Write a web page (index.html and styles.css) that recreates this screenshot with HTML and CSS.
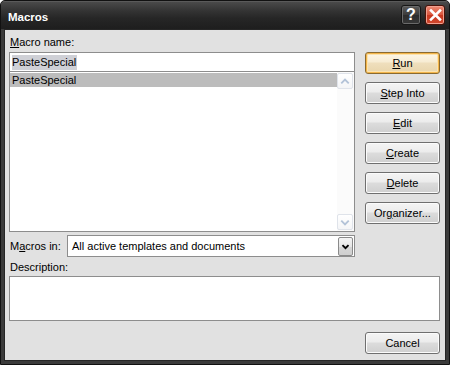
FILE: index.html
```html
<!DOCTYPE html>
<html>
<head>
<meta charset="utf-8">
<title>Macros</title>
<link rel="stylesheet" href="styles.css">
</head>
<body>
<div class="window">
  <div class="titlebar">
    <span class="title">Macros</span>
    <div class="caption-btns">
      <div class="cap help">?</div>
      <div class="cap close">
        <svg width="19" height="20" viewBox="0 0 19 20"><path d="M5 5.5 L14 14.5 M14 5.5 L5 14.5" stroke="#fff" stroke-width="2.6" stroke-linecap="square" fill="none"/></svg>
      </div>
    </div>
  </div>
  <div class="client">
    <div class="main">
      <div class="left">
        <div class="lbl"><u>M</u>acro name:</div>
        <div class="input"><span class="sel">PasteSpecial</span></div>
        <div class="list">
          <div class="items">
            <div class="item selected">PasteSpecial</div>
          </div>
          <div class="scroll">
            <div class="sbtn">
              <svg width="15" height="15" viewBox="0 0 15 15"><path d="M3.5 9.5 L7.5 5.5 L11.5 9.5" stroke="#b3c3d8" stroke-width="2" fill="none"/></svg>
            </div>
            <div class="track"></div>
            <div class="sbtn">
              <svg width="15" height="15" viewBox="0 0 15 15"><path d="M3.5 5.5 L7.5 9.5 L11.5 5.5" stroke="#b3c3d8" stroke-width="2" fill="none"/></svg>
            </div>
          </div>
        </div>
        <div class="row-in">
          <div class="lbl in-lbl">M<u>a</u>cros in:</div>
          <div class="combo">
            <span class="combo-text">All active templates and documents</span>
            <div class="dd">
              <svg width="15" height="19" viewBox="0 0 15 19"><path d="M4 8 L7.5 11.5 L11 8" stroke="#000" stroke-width="2.2" fill="none"/></svg>
            </div>
          </div>
        </div>
      </div>
      <div class="buttons">
        <div class="btn default"><u>R</u>un</div>
        <div class="btn"><u>S</u>tep Into</div>
        <div class="btn"><u>E</u>dit</div>
        <div class="btn"><u>C</u>reate</div>
        <div class="btn"><u>D</u>elete</div>
        <div class="btn">Or<u>g</u>anizer...</div>
      </div>
    </div>
    <div class="lbl desc-lbl">Description:</div>
    <div class="desc"></div>
    <div class="footer">
      <div class="btn">Cancel</div>
    </div>
  </div>
</div>
</body>
</html>
```

FILE: styles.css
```css
* { box-sizing: border-box; }
html, body { margin: 0; padding: 0; background: #ffffff; }
body { font-family: "Liberation Sans", Arial, sans-serif; font-size: 11px; color: #000; }

.window {
  width: 450px;
  height: 365px;
  background: #3b3b3b;
  border: 1px solid #111;
  border-radius: 5px 5px 0 0;
  display: flex;
  flex-direction: column;
  overflow: hidden;
}

.titlebar {
  height: 28px;
  flex: none;
  display: flex;
  align-items: flex-start;
  justify-content: space-between;
  background: linear-gradient(#4a4a4a 0%, #353535 30%, #262626 60%, #1e1e1e 100%);
  border-top: 1px solid #5a5a5a;
}
.title {
  color: #fff;
  font-weight: bold;
  font-size: 11.5px;
  padding-left: 7px;
  margin-top: 8px;
  line-height: 14px;
}
.caption-btns {
  display: flex;
  gap: 4px;
  margin-top: 3px;
  margin-right: 4px;
}
.cap {
  width: 20px;
  height: 20px;
  border-radius: 3px;
  display: flex;
  align-items: center;
  justify-content: center;
}
.help {
  background: linear-gradient(#5c5c5c, #3a3a3a 50%, #2c2c2c 51%, #383838);
  border: 1px solid #161616;
  box-shadow: inset 0 0 0 1px #6a6a6a;
  color: #fff;
  font-weight: bold;
  font-size: 16px;
  line-height: 18px;
}
.close {
  background: linear-gradient(#ec8a74, #d9543c 50%, #c8371f 51%, #d0482e);
  border: 1px solid #4a1208;
  box-shadow: inset 0 0 0 1px #f0a090;
}
.close svg { display: block; margin: -1px; }

.client {
  flex: 1;
  margin: 0 3px 3px;
  background: #e1e1e1;
  border: 1px solid #262626;
  padding: 6px 5px 6px 4px;
  display: flex;
  flex-direction: column;
}

.main {
  display: flex;
  gap: 10px;
}
.left {
  width: 346px;
  display: flex;
  flex-direction: column;
}
.lbl {
  line-height: 13px;
  height: 13px;
  padding-left: 1px;
}
.left > .lbl { margin-bottom: 3px; }

.input {
  height: 20px;
  background: #fff;
  border: 1px solid #8d8d8d;
  padding: 2px 0 0 2px;
  line-height: 15px;
}
.sel {
  background: #cfd0d6;
  padding: 0 1px 0 0;
  display: inline-block;
}

.list {
  height: 160px;
  background: #fff;
  border: 1px solid #8d8d8d;
  border-top: none;
  display: flex;
}
.items {
  flex: 1;
  padding-top: 1px;
}
.item {
  height: 14px;
  line-height: 14px;
  padding-left: 2px;
}
.item.selected { background: #bcbcbc; }

.scroll {
  width: 17px;
  display: flex;
  flex-direction: column;
  background: #fbfbfb;
  padding: 1px 1px 1px 0;
}
.sbtn {
  height: 16px;
  border: 1px solid #dfe3ea;
  border-radius: 2px;
  background: linear-gradient(#ffffff, #f4f5f7);
  display: flex;
  align-items: center;
  justify-content: center;
}
.track { flex: 1; }

.row-in {
  margin-top: 3px;
  display: flex;
  align-items: center;
  height: 22px;
}
.in-lbl { width: 58px; }
.combo {
  flex: 1;
  height: 22px;
  background: #fff;
  border: 1px solid #8d8d8d;
  display: flex;
  align-items: center;
  justify-content: space-between;
  padding: 1px;
}
.combo-text {
  padding-left: 3px;
}
.dd {
  width: 15px;
  height: 19px;
  border: 1px solid #8a8a8a;
  border-radius: 2px;
  background: linear-gradient(#f4f4f4, #e6e6e6 50%, #d6d6d6 51%, #cfcfcf);
  display: flex;
  align-items: center;
  justify-content: center;
}
.dd svg { display: block; }

.buttons {
  width: 75px;
  padding-top: 16px;
  display: flex;
  flex-direction: column;
  gap: 8px;
}
.btn {
  height: 22px;
  width: 75px;
  border: 1px solid #6f6f6f;
  border-radius: 3px;
  background: linear-gradient(#f4f4f4 0%, #ececec 45%, #dcdcdc 50%, #cfcfcf 100%);
  box-shadow: inset 0 0 0 1px #fbfbfb;
  display: flex;
  align-items: center;
  justify-content: center;
  line-height: 14px;
}
.btn.default {
  border-color: #8a6a30;
  background: linear-gradient(#fdf7e9 0%, #f7ecd3 45%, #efdfbd 50%, #e9d5ab 100%);
  box-shadow: inset 0 0 0 1px #f3b54a, inset 0 0 0 2px #fce3ae;
}

.desc-lbl { margin-top: 4px; }
.desc {
  margin-top: 2px;
  height: 45px;
  background: #fff;
  border: 1px solid #8d8d8d;
}
.footer {
  margin-top: 11px;
  display: flex;
  justify-content: flex-end;
}
```
